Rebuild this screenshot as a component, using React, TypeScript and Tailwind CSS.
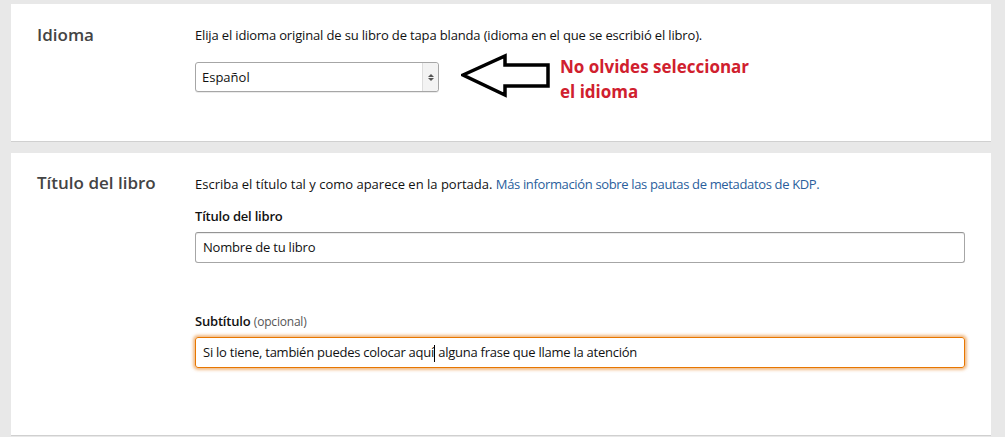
import React from 'react';

function Arrow() {
  return (
    <svg width="92" height="48" viewBox="0 0 92 48" className="shrink-0">
      <path
        d="M2 22 L44 3 L44 12 L87 12 L87 33 L44 33 L44 42 Z"
        fill="white"
        stroke="black"
        strokeWidth="3.5"
        strokeLinejoin="miter"
      />
    </svg>
  );
}

export default function App() {
  return (
    <div
      className="min-h-[437px] w-[1005px] bg-[#e8e8e8] pt-1 pl-[11px] pr-[14px] text-[13px] text-[#111]"
      style={{ fontFamily: '"Open Sans", "Noto Sans", Arial, sans-serif' }}
    >
      {/* Idioma */}
      <section className="flex h-[138px] bg-white border-b border-[#d0d0d0] pt-[21px]">
        <h2 className="w-[184px] pl-[26px] text-[17px] font-semibold text-[#444] leading-[20px]">Idioma</h2>
        <div className="flex-1">
          <p className="leading-[20px] tracking-[-0.15px]">
            Elija el idioma original de su libro de tapa blanda (idioma en el que se escribió el libro).
          </p>
          <div className="mt-[17px] flex items-start">
            <div className="flex h-[30px] w-[244px] rounded-[3px] border border-[#a6a6a6] bg-white shadow-[0_1px_0_rgba(0,0,0,0.08)]">
              <span className="flex-1 pl-[6px] leading-[28px]">Español</span>
              <span className="flex w-[16px] flex-col items-center justify-center gap-[1px] rounded-r-[3px] border-l border-[#ddd] bg-[#f3f3f3]">
                <span className="h-0 w-0 border-x-[3px] border-b-[3px] border-x-transparent border-b-[#555]" />
                <span className="h-0 w-0 border-x-[3px] border-t-[3px] border-x-transparent border-t-[#555]" />
              </span>
            </div>
            <div className="ml-[22px] -mt-[9px]">
              <Arrow />
            </div>
            <p
              className="ml-[7px] -mt-[8px] text-[17px] font-bold leading-[25px] text-[#d0202e]"
              style={{ fontFamily: '"Open Sans", sans-serif' }}
            >
              No olvides seleccionar
              <br />
              el idioma
            </p>
          </div>
        </div>
      </section>

      {/* Título del libro */}
      <section className="mt-[11px] flex h-[283px] bg-white border-b border-[#d0d0d0] pt-[20px]">
        <h2 className="w-[184px] pl-[26px] text-[17px] font-semibold text-[#444] leading-[20px]">Título del libro</h2>
        <div className="flex-1 pr-[26px]">
          <p className="leading-[20px] pt-[1px]">
            Escriba el título tal y como aparece en la portada.{' '}
            <a href="#" className="text-[#2a5e9c] tracking-[-0.35px]">Más información sobre las pautas de metadatos de KDP.</a>
          </p>
          <label className="mt-[13px] block font-semibold leading-[18px] tracking-[-0.2px]">Título del libro</label>
          <div className="mt-[7px] h-[31px] rounded-[3px] border border-[#a6a6a6] border-t-[#949494] pl-[7px] leading-[29px] tracking-[-0.2px] shadow-[0_1px_0_rgba(255,255,255,0.5),inset_0_1px_0_rgba(0,0,0,0.07)]">
            Nombre de tu libro
          </div>
          <label className="mt-[49px] block leading-[18px]">
            <span className="font-semibold tracking-[-0.2px]">Subtítulo</span>{' '}
            <span className="text-[#555] text-[12px] tracking-[-0.2px]">(opcional)</span>
          </label>
          <div className="mt-[6px] h-[31px] rounded-[3px] border border-[#e77600] pl-[7px] leading-[29px] tracking-[-0.25px] shadow-[0_0_3px_2px_rgba(228,121,17,0.5)]">
            Si lo tiene, también puedes colocar aquí
            <span className="inline-block h-[17px] w-px bg-black align-middle" />
            {' '}alguna frase que llame la atención
          </div>
        </div>
      </section>
    </div>
  );
}
